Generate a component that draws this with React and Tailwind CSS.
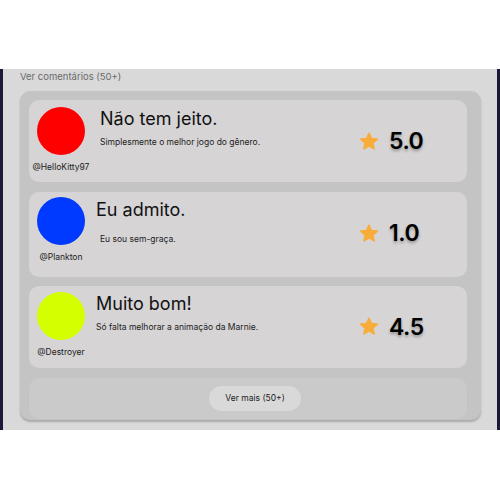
import React from "react";

const Star = () => (
  <svg width="20" height="19" viewBox="0 0 24 23" className="shrink-0">
    <path
      d="M12 1.5 L14.9 8.1 L22 8.7 L16.6 13.4 L18.2 20.4 L12 16.7 L5.8 20.4 L7.4 13.4 L2 8.7 L9.1 8.1 Z"
      fill="#f8ad3b"
      stroke="#f8ad3b"
      strokeWidth="2"
      strokeLinejoin="round"
    />
  </svg>
);

const comments = [
  {
    color: "bg-[#ff0000]",
    user: "@HelloKitty97",
    title: "Não tem jeito.",
    text: "Simplesmente o melhor jogo do gênero.",
    rating: "5.0",
    card: "h-[82px] pt-[7px]",
    titleCls: "ml-[11px]",
    textCls: "ml-[11px] mt-[5px]",
  },
  {
    color: "bg-[#0039ff]",
    user: "@Plankton",
    title: "Eu admito.",
    text: "Eu sou sem-graça.",
    rating: "1.0",
    card: "h-[85px] pt-[5px]",
    titleCls: "ml-[7px] mt-[1px]",
    textCls: "ml-[11px] mt-[11px]",
  },
  {
    color: "bg-[#d4ff00]",
    user: "@Destroyer",
    title: "Muito bom!",
    text: "Só falta melhorar a animação da Marnie.",
    rating: "4.5",
    card: "h-[82px] pt-[6px]",
    titleCls: "ml-[7px]",
    textCls: "ml-[7px] mt-[5px]",
  },
];

export default function App() {
  return (
    <div
      className="w-[500px] h-[500px] bg-white pt-[69px]"
      style={{ fontFamily: "Inter, 'Open Sans', sans-serif" }}
    >
      <div className="h-[361px] bg-[#1b1838] px-[3px]">
        <div className="h-full bg-[#d9d9d9] pl-[17px] pr-[16px] pt-[1px]">
          <div className="text-[9.5px] leading-[14px] text-[#6b6b6b] mb-[7px]">
            Ver comentários (50+)
          </div>
          <div className="h-[329px] rounded-[10px] bg-[#c4c4c4] pl-[9px] pr-[14px] pt-[9px] shadow-[0_2px_2px_rgba(0,0,0,0.22)] flex flex-col">
            <div className="flex flex-col gap-[9.5px]">
              {comments.map((c, i) => (
                <div
                  key={i}
                  className={`flex rounded-[10px] bg-[#d6d4d5] pl-[4px] ${c.card}`}
                >
                  <div className="w-[56px] flex flex-col items-center shrink-0">
                    <div className={`w-[48px] h-[48px] rounded-full ${c.color}`} />
                    <div className="mt-[6px] text-[8.5px] leading-[12px] text-[#222] whitespace-nowrap">
                      {c.user}
                    </div>
                  </div>
                  <div className="flex-1 flex flex-col">
                    <div className={`text-[18px] leading-[24px] text-[#111] whitespace-nowrap ${c.titleCls}`}>
                      {c.title}
                    </div>
                    <div className={`text-[8.5px] leading-[12px] text-[#222] whitespace-nowrap ${c.textCls}`}>
                      {c.text}
                    </div>
                  </div>
                  <div className="w-[108px] shrink-0 self-center flex items-center gap-[10px] -mt-[7px]">
                    <Star />
                    <span className="text-[23px] font-semibold leading-[28px] text-black tracking-[-0.5px] [text-shadow:0_2px_3px_rgba(0,0,0,0.3)]">
                      {c.rating}
                    </span>
                  </div>
                </div>
              ))}
              <div className="h-[41px] rounded-[10px] bg-[#cacaca] flex items-center justify-center pl-[14px]">
                <div className="w-[92px] h-[25px] rounded-full bg-[#d9d9d9] flex items-center justify-center text-[8.5px] text-[#222]">
                  Ver mais (50+)
                </div>
              </div>
            </div>
          </div>
        </div>
      </div>
    </div>
  );
}
